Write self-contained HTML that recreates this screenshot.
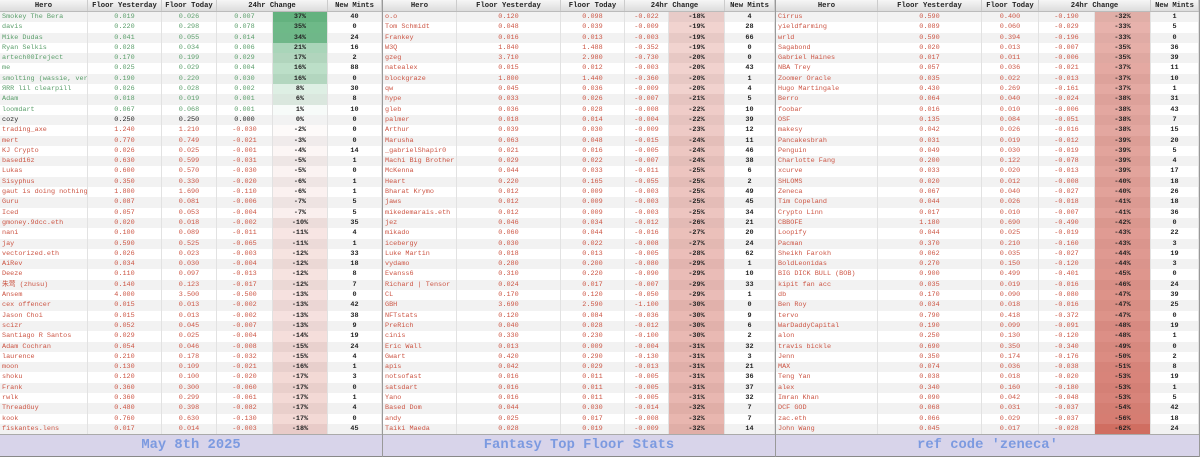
<!DOCTYPE html>
<html><head><meta charset="utf-8"><style>
*{margin:0;padding:0;box-sizing:border-box}
body{width:1200px;height:457px;background:#fff;font-family:"Liberation Mono","Noto Sans CJK SC",monospace;overflow:hidden;position:relative}
.p{position:absolute;top:0;height:457px;border-right:1px solid #999}
.h{height:12px;display:flex;background:linear-gradient(#f6f6f6,#dcdcdc);border-bottom:1px solid #bbb;font-weight:bold;font-size:7.2px;line-height:12px;color:#222}
.h span{text-align:center;border-right:1px solid #ccc;white-space:nowrap;overflow:hidden}
.r{height:10.3px;display:flex;font-size:6.8px;line-height:10.3px;color:#cc5544;white-space:nowrap}
.r:nth-child(odd){background:#f2f2f2}
.r>*{border-right:1px solid #e2e2e2;overflow:hidden;text-align:center;font-style:normal;text-decoration:none;font-weight:normal}
.r b{text-align:left;padding-left:2px}
.r u{background:rgba(200,80,65,var(--a));color:#222;font-weight:bold}
.r s{color:#222;font-weight:bold}
.g{color:#5a9e6a}.g u{background:rgba(60,160,95,var(--a))}
.k{color:#222;font-weight:bold}.k u{background:none}
.f{position:absolute;left:0;right:0;top:434px;height:23px;background:#d8d4ea;border-top:1px solid #aaa;border-bottom:1px solid #888;text-align:center;font-weight:bold;font-size:13.8px;line-height:22px;color:#7c9ae0}
.p1 .c1{width:88px}.p1 .c2{width:74px}.p1 .c3{width:55px}.p1 .c4{width:56px}.p1 .c5{width:55px}.p1 .c6{width:54px}.p1 .c45{width:111px}
.p2 .c1{width:74px}.p2 .c2{width:104px}.p2 .c3{width:64px}.p2 .c4{width:44px}.p2 .c5{width:56px}.p2 .c6{width:50px}.p2 .c45{width:100px}
.p3 .c1{width:102px}.p3 .c2{width:104px}.p3 .c3{width:57px}.p3 .c4{width:56px}.p3 .c5{width:56px}.p3 .c6{width:48px}.p3 .c45{width:112px}
</style></head><body>

<div class="p p1" style="left:0;width:383px">
<div class="h"><span class="c1">Hero</span><span class="c2">Floor Yesterday</span><span class="c3">Floor Today</span><span class="c45">24hr Change</span><span class="c6">New Mints</span></div>
<div>
<div class="r g"><b class="c1">Smokey The Bera</b><i class="c2">0.019</i><i class="c3">0.026</i><i class="c4">0.007</i><u class="c5" style="--a:.78">37%</u><s class="c6">40</s></div>
<div class="r g"><b class="c1">davis</b><i class="c2">0.220</i><i class="c3">0.298</i><i class="c4">0.078</i><u class="c5" style="--a:.74">35%</u><s class="c6">0</s></div>
<div class="r g"><b class="c1">Mike Dudas</b><i class="c2">0.041</i><i class="c3">0.055</i><i class="c4">0.014</i><u class="c5" style="--a:.72">34%</u><s class="c6">24</s></div>
<div class="r g"><b class="c1">Ryan Selkis</b><i class="c2">0.028</i><i class="c3">0.034</i><i class="c4">0.006</i><u class="c5" style="--a:.44">21%</u><s class="c6">16</s></div>
<div class="r g"><b class="c1">artech00Ireject</b><i class="c2">0.170</i><i class="c3">0.199</i><i class="c4">0.029</i><u class="c5" style="--a:.36">17%</u><s class="c6">2</s></div>
<div class="r g"><b class="c1">me</b><i class="c2">0.025</i><i class="c3">0.029</i><i class="c4">0.004</i><u class="c5" style="--a:.34">16%</u><s class="c6">88</s></div>
<div class="r g"><b class="c1">smolting (wassie, verb)</b><i class="c2">0.190</i><i class="c3">0.220</i><i class="c4">0.030</i><u class="c5" style="--a:.34">16%</u><s class="c6">0</s></div>
<div class="r g"><b class="c1">ЯRR lil clearpill</b><i class="c2">0.026</i><i class="c3">0.028</i><i class="c4">0.002</i><u class="c5" style="--a:.17">8%</u><s class="c6">30</s></div>
<div class="r g"><b class="c1">Adam</b><i class="c2">0.018</i><i class="c3">0.019</i><i class="c4">0.001</i><u class="c5" style="--a:.13">6%</u><s class="c6">8</s></div>
<div class="r g"><b class="c1">loomdart</b><i class="c2">0.067</i><i class="c3">0.068</i><i class="c4">0.001</i><u class="c5" style="--a:.04">1%</u><s class="c6">10</s></div>
<div class="r k"><b class="c1">cozy</b><i class="c2">0.250</i><i class="c3">0.250</i><i class="c4">0.000</i><u class="c5">0%</u><s class="c6">0</s></div>
<div class="r"><b class="c1">trading_axe</b><i class="c2">1.240</i><i class="c3">1.210</i><i class="c4">-0.030</i><u class="c5" style="--a:.03">-2%</u><s class="c6">0</s></div>
<div class="r"><b class="c1">mert</b><i class="c2">0.770</i><i class="c3">0.749</i><i class="c4">-0.021</i><u class="c5" style="--a:.04">-3%</u><s class="c6">0</s></div>
<div class="r"><b class="c1">KJ Crypto</b><i class="c2">0.026</i><i class="c3">0.025</i><i class="c4">-0.001</i><u class="c5" style="--a:.05">-4%</u><s class="c6">14</s></div>
<div class="r"><b class="c1">based16z</b><i class="c2">0.630</i><i class="c3">0.599</i><i class="c4">-0.031</i><u class="c5" style="--a:.07">-5%</u><s class="c6">1</s></div>
<div class="r"><b class="c1">Lukas</b><i class="c2">0.600</i><i class="c3">0.570</i><i class="c4">-0.030</i><u class="c5" style="--a:.07">-5%</u><s class="c6">0</s></div>
<div class="r"><b class="c1">Sisyphus</b><i class="c2">0.350</i><i class="c3">0.330</i><i class="c4">-0.020</i><u class="c5" style="--a:.08">-6%</u><s class="c6">1</s></div>
<div class="r"><b class="c1">gaut is doing nothing</b><i class="c2">1.800</i><i class="c3">1.690</i><i class="c4">-0.110</i><u class="c5" style="--a:.08">-6%</u><s class="c6">1</s></div>
<div class="r"><b class="c1">Guru</b><i class="c2">0.087</i><i class="c3">0.081</i><i class="c4">-0.006</i><u class="c5" style="--a:.09">-7%</u><s class="c6">5</s></div>
<div class="r"><b class="c1">Iced</b><i class="c2">0.057</i><i class="c3">0.053</i><i class="c4">-0.004</i><u class="c5" style="--a:.09">-7%</u><s class="c6">5</s></div>
<div class="r"><b class="c1">gmoney.9dcc.eth</b><i class="c2">0.020</i><i class="c3">0.018</i><i class="c4">-0.002</i><u class="c5" style="--a:.13">-10%</u><s class="c6">35</s></div>
<div class="r"><b class="c1">nani</b><i class="c2">0.100</i><i class="c3">0.089</i><i class="c4">-0.011</i><u class="c5" style="--a:.15">-11%</u><s class="c6">4</s></div>
<div class="r"><b class="c1">jay</b><i class="c2">0.590</i><i class="c3">0.525</i><i class="c4">-0.065</i><u class="c5" style="--a:.15">-11%</u><s class="c6">1</s></div>
<div class="r"><b class="c1">vectorized.eth</b><i class="c2">0.026</i><i class="c3">0.023</i><i class="c4">-0.003</i><u class="c5" style="--a:.16">-12%</u><s class="c6">33</s></div>
<div class="r"><b class="c1">AiRev</b><i class="c2">0.034</i><i class="c3">0.030</i><i class="c4">-0.004</i><u class="c5" style="--a:.16">-12%</u><s class="c6">18</s></div>
<div class="r"><b class="c1">Deeze</b><i class="c2">0.110</i><i class="c3">0.097</i><i class="c4">-0.013</i><u class="c5" style="--a:.16">-12%</u><s class="c6">8</s></div>
<div class="r"><b class="c1">朱莺 (zhusu)</b><i class="c2">0.140</i><i class="c3">0.123</i><i class="c4">-0.017</i><u class="c5" style="--a:.16">-12%</u><s class="c6">7</s></div>
<div class="r"><b class="c1">Ansem</b><i class="c2">4.000</i><i class="c3">3.500</i><i class="c4">-0.500</i><u class="c5" style="--a:.17">-13%</u><s class="c6">0</s></div>
<div class="r"><b class="c1">cex offencer</b><i class="c2">0.015</i><i class="c3">0.013</i><i class="c4">-0.002</i><u class="c5" style="--a:.17">-13%</u><s class="c6">42</s></div>
<div class="r"><b class="c1">Jason Choi</b><i class="c2">0.015</i><i class="c3">0.013</i><i class="c4">-0.002</i><u class="c5" style="--a:.17">-13%</u><s class="c6">38</s></div>
<div class="r"><b class="c1">scizr</b><i class="c2">0.052</i><i class="c3">0.045</i><i class="c4">-0.007</i><u class="c5" style="--a:.17">-13%</u><s class="c6">9</s></div>
<div class="r"><b class="c1">Santiago R Santos</b><i class="c2">0.029</i><i class="c3">0.025</i><i class="c4">-0.004</i><u class="c5" style="--a:.19">-14%</u><s class="c6">19</s></div>
<div class="r"><b class="c1">Adam Cochran</b><i class="c2">0.054</i><i class="c3">0.046</i><i class="c4">-0.008</i><u class="c5" style="--a:.2">-15%</u><s class="c6">24</s></div>
<div class="r"><b class="c1">laurence</b><i class="c2">0.210</i><i class="c3">0.178</i><i class="c4">-0.032</i><u class="c5" style="--a:.2">-15%</u><s class="c6">4</s></div>
<div class="r"><b class="c1">moon</b><i class="c2">0.130</i><i class="c3">0.109</i><i class="c4">-0.021</i><u class="c5" style="--a:.21">-16%</u><s class="c6">1</s></div>
<div class="r"><b class="c1">shoku</b><i class="c2">0.120</i><i class="c3">0.100</i><i class="c4">-0.020</i><u class="c5" style="--a:.22">-17%</u><s class="c6">3</s></div>
<div class="r"><b class="c1">Frank</b><i class="c2">0.360</i><i class="c3">0.300</i><i class="c4">-0.060</i><u class="c5" style="--a:.22">-17%</u><s class="c6">0</s></div>
<div class="r"><b class="c1">rwlk</b><i class="c2">0.360</i><i class="c3">0.299</i><i class="c4">-0.061</i><u class="c5" style="--a:.22">-17%</u><s class="c6">1</s></div>
<div class="r"><b class="c1">ThreadGuy</b><i class="c2">0.480</i><i class="c3">0.398</i><i class="c4">-0.082</i><u class="c5" style="--a:.22">-17%</u><s class="c6">4</s></div>
<div class="r"><b class="c1">kook</b><i class="c2">0.760</i><i class="c3">0.630</i><i class="c4">-0.130</i><u class="c5" style="--a:.22">-17%</u><s class="c6">0</s></div>
<div class="r"><b class="c1">fiskantes.lens</b><i class="c2">0.017</i><i class="c3">0.014</i><i class="c4">-0.003</i><u class="c5" style="--a:.24">-18%</u><s class="c6">45</s></div>
</div>
<div class="f">May 8th 2025</div>
</div>

<div class="p p2" style="left:383px;width:393px">
<div class="h"><span class="c1">Hero</span><span class="c2">Floor Yesterday</span><span class="c3">Floor Today</span><span class="c45">24hr Change</span><span class="c6">New Mints</span></div>
<div>
<div class="r"><b class="c1">o.o</b><i class="c2">0.120</i><i class="c3">0.098</i><i class="c4">-0.022</i><u class="c5" style="--a:.24">-18%</u><s class="c6">4</s></div>
<div class="r"><b class="c1">Tom Schmidt</b><i class="c2">0.048</i><i class="c3">0.039</i><i class="c4">-0.009</i><u class="c5" style="--a:.25">-19%</u><s class="c6">28</s></div>
<div class="r"><b class="c1">Frankey</b><i class="c2">0.016</i><i class="c3">0.013</i><i class="c4">-0.003</i><u class="c5" style="--a:.25">-19%</u><s class="c6">66</s></div>
<div class="r"><b class="c1">W3Q</b><i class="c2">1.840</i><i class="c3">1.488</i><i class="c4">-0.352</i><u class="c5" style="--a:.25">-19%</u><s class="c6">0</s></div>
<div class="r"><b class="c1">gzeg</b><i class="c2">3.710</i><i class="c3">2.980</i><i class="c4">-0.730</i><u class="c5" style="--a:.26">-20%</u><s class="c6">0</s></div>
<div class="r"><b class="c1">natealex</b><i class="c2">0.015</i><i class="c3">0.012</i><i class="c4">-0.003</i><u class="c5" style="--a:.26">-20%</u><s class="c6">43</s></div>
<div class="r"><b class="c1">blockgraze</b><i class="c2">1.800</i><i class="c3">1.440</i><i class="c4">-0.360</i><u class="c5" style="--a:.26">-20%</u><s class="c6">1</s></div>
<div class="r"><b class="c1">qw</b><i class="c2">0.045</i><i class="c3">0.036</i><i class="c4">-0.009</i><u class="c5" style="--a:.26">-20%</u><s class="c6">4</s></div>
<div class="r"><b class="c1">hype</b><i class="c2">0.033</i><i class="c3">0.026</i><i class="c4">-0.007</i><u class="c5" style="--a:.28">-21%</u><s class="c6">5</s></div>
<div class="r"><b class="c1">gleb</b><i class="c2">0.036</i><i class="c3">0.028</i><i class="c4">-0.008</i><u class="c5" style="--a:.29">-22%</u><s class="c6">10</s></div>
<div class="r"><b class="c1">palmer</b><i class="c2">0.018</i><i class="c3">0.014</i><i class="c4">-0.004</i><u class="c5" style="--a:.29">-22%</u><s class="c6">39</s></div>
<div class="r"><b class="c1">Arthur</b><i class="c2">0.039</i><i class="c3">0.030</i><i class="c4">-0.009</i><u class="c5" style="--a:.3">-23%</u><s class="c6">12</s></div>
<div class="r"><b class="c1">Marusha</b><i class="c2">0.063</i><i class="c3">0.048</i><i class="c4">-0.015</i><u class="c5" style="--a:.32">-24%</u><s class="c6">11</s></div>
<div class="r"><b class="c1">_gabrielShapir0</b><i class="c2">0.021</i><i class="c3">0.016</i><i class="c4">-0.005</i><u class="c5" style="--a:.32">-24%</u><s class="c6">46</s></div>
<div class="r"><b class="c1">Machi Big Brother</b><i class="c2">0.029</i><i class="c3">0.022</i><i class="c4">-0.007</i><u class="c5" style="--a:.32">-24%</u><s class="c6">38</s></div>
<div class="r"><b class="c1">McKenna</b><i class="c2">0.044</i><i class="c3">0.033</i><i class="c4">-0.011</i><u class="c5" style="--a:.33">-25%</u><s class="c6">6</s></div>
<div class="r"><b class="c1">Heart</b><i class="c2">0.220</i><i class="c3">0.165</i><i class="c4">-0.055</i><u class="c5" style="--a:.33">-25%</u><s class="c6">2</s></div>
<div class="r"><b class="c1">Bharat Krymo</b><i class="c2">0.012</i><i class="c3">0.009</i><i class="c4">-0.003</i><u class="c5" style="--a:.33">-25%</u><s class="c6">49</s></div>
<div class="r"><b class="c1">jaws</b><i class="c2">0.012</i><i class="c3">0.009</i><i class="c4">-0.003</i><u class="c5" style="--a:.33">-25%</u><s class="c6">45</s></div>
<div class="r"><b class="c1">mikedemarais.eth</b><i class="c2">0.012</i><i class="c3">0.009</i><i class="c4">-0.003</i><u class="c5" style="--a:.33">-25%</u><s class="c6">34</s></div>
<div class="r"><b class="c1">jez</b><i class="c2">0.046</i><i class="c3">0.034</i><i class="c4">-0.012</i><u class="c5" style="--a:.34">-26%</u><s class="c6">21</s></div>
<div class="r"><b class="c1">mikado</b><i class="c2">0.060</i><i class="c3">0.044</i><i class="c4">-0.016</i><u class="c5" style="--a:.36">-27%</u><s class="c6">20</s></div>
<div class="r"><b class="c1">icebergy</b><i class="c2">0.030</i><i class="c3">0.022</i><i class="c4">-0.008</i><u class="c5" style="--a:.36">-27%</u><s class="c6">24</s></div>
<div class="r"><b class="c1">Luke Martin</b><i class="c2">0.018</i><i class="c3">0.013</i><i class="c4">-0.005</i><u class="c5" style="--a:.37">-28%</u><s class="c6">62</s></div>
<div class="r"><b class="c1">vydamo</b><i class="c2">0.280</i><i class="c3">0.200</i><i class="c4">-0.080</i><u class="c5" style="--a:.38">-29%</u><s class="c6">1</s></div>
<div class="r"><b class="c1">Evanss6</b><i class="c2">0.310</i><i class="c3">0.220</i><i class="c4">-0.090</i><u class="c5" style="--a:.38">-29%</u><s class="c6">10</s></div>
<div class="r"><b class="c1">Richard | Tensor</b><i class="c2">0.024</i><i class="c3">0.017</i><i class="c4">-0.007</i><u class="c5" style="--a:.38">-29%</u><s class="c6">33</s></div>
<div class="r"><b class="c1">CL</b><i class="c2">0.170</i><i class="c3">0.120</i><i class="c4">-0.050</i><u class="c5" style="--a:.38">-29%</u><s class="c6">1</s></div>
<div class="r"><b class="c1">GBH</b><i class="c2">3.690</i><i class="c3">2.590</i><i class="c4">-1.100</i><u class="c5" style="--a:.4">-30%</u><s class="c6">0</s></div>
<div class="r"><b class="c1">NFTstats</b><i class="c2">0.120</i><i class="c3">0.084</i><i class="c4">-0.036</i><u class="c5" style="--a:.4">-30%</u><s class="c6">9</s></div>
<div class="r"><b class="c1">PreRich</b><i class="c2">0.040</i><i class="c3">0.028</i><i class="c4">-0.012</i><u class="c5" style="--a:.4">-30%</u><s class="c6">6</s></div>
<div class="r"><b class="c1">cinis</b><i class="c2">0.330</i><i class="c3">0.230</i><i class="c4">-0.100</i><u class="c5" style="--a:.4">-30%</u><s class="c6">2</s></div>
<div class="r"><b class="c1">Eric Wall</b><i class="c2">0.013</i><i class="c3">0.009</i><i class="c4">-0.004</i><u class="c5" style="--a:.41">-31%</u><s class="c6">32</s></div>
<div class="r"><b class="c1">Gwart</b><i class="c2">0.420</i><i class="c3">0.290</i><i class="c4">-0.130</i><u class="c5" style="--a:.41">-31%</u><s class="c6">3</s></div>
<div class="r"><b class="c1">apis</b><i class="c2">0.042</i><i class="c3">0.029</i><i class="c4">-0.013</i><u class="c5" style="--a:.41">-31%</u><s class="c6">21</s></div>
<div class="r"><b class="c1">notsofast</b><i class="c2">0.016</i><i class="c3">0.011</i><i class="c4">-0.005</i><u class="c5" style="--a:.41">-31%</u><s class="c6">36</s></div>
<div class="r"><b class="c1">satsdart</b><i class="c2">0.016</i><i class="c3">0.011</i><i class="c4">-0.005</i><u class="c5" style="--a:.41">-31%</u><s class="c6">37</s></div>
<div class="r"><b class="c1">Yano</b><i class="c2">0.016</i><i class="c3">0.011</i><i class="c4">-0.005</i><u class="c5" style="--a:.41">-31%</u><s class="c6">32</s></div>
<div class="r"><b class="c1">Based Dom</b><i class="c2">0.044</i><i class="c3">0.030</i><i class="c4">-0.014</i><u class="c5" style="--a:.42">-32%</u><s class="c6">7</s></div>
<div class="r"><b class="c1">andy</b><i class="c2">0.025</i><i class="c3">0.017</i><i class="c4">-0.008</i><u class="c5" style="--a:.42">-32%</u><s class="c6">7</s></div>
<div class="r"><b class="c1">Taiki Maeda</b><i class="c2">0.028</i><i class="c3">0.019</i><i class="c4">-0.009</i><u class="c5" style="--a:.42">-32%</u><s class="c6">14</s></div>
</div>
<div class="f">Fantasy Top Floor Stats</div>
</div>

<div class="p p3" style="left:776px;width:424px">
<div class="h"><span class="c1">Hero</span><span class="c2">Floor Yesterday</span><span class="c3">Floor Today</span><span class="c45">24hr Change</span><span class="c6">New Mints</span></div>
<div>
<div class="r"><b class="c1">Cirrus</b><i class="c2">0.590</i><i class="c3">0.400</i><i class="c4">-0.190</i><u class="c5" style="--a:.42">-32%</u><s class="c6">1</s></div>
<div class="r"><b class="c1">yieldfarming</b><i class="c2">0.089</i><i class="c3">0.060</i><i class="c4">-0.029</i><u class="c5" style="--a:.44">-33%</u><s class="c6">5</s></div>
<div class="r"><b class="c1">wrld</b><i class="c2">0.590</i><i class="c3">0.394</i><i class="c4">-0.196</i><u class="c5" style="--a:.44">-33%</u><s class="c6">0</s></div>
<div class="r"><b class="c1">Sagabond</b><i class="c2">0.020</i><i class="c3">0.013</i><i class="c4">-0.007</i><u class="c5" style="--a:.46">-35%</u><s class="c6">36</s></div>
<div class="r"><b class="c1">Gabriel Haines</b><i class="c2">0.017</i><i class="c3">0.011</i><i class="c4">-0.006</i><u class="c5" style="--a:.46">-35%</u><s class="c6">39</s></div>
<div class="r"><b class="c1">NBA Trey</b><i class="c2">0.057</i><i class="c3">0.036</i><i class="c4">-0.021</i><u class="c5" style="--a:.49">-37%</u><s class="c6">11</s></div>
<div class="r"><b class="c1">Zoomer Oracle</b><i class="c2">0.035</i><i class="c3">0.022</i><i class="c4">-0.013</i><u class="c5" style="--a:.49">-37%</u><s class="c6">10</s></div>
<div class="r"><b class="c1">Hugo Martingale</b><i class="c2">0.430</i><i class="c3">0.269</i><i class="c4">-0.161</i><u class="c5" style="--a:.49">-37%</u><s class="c6">1</s></div>
<div class="r"><b class="c1">Berro</b><i class="c2">0.064</i><i class="c3">0.040</i><i class="c4">-0.024</i><u class="c5" style="--a:.5">-38%</u><s class="c6">31</s></div>
<div class="r"><b class="c1">foobar</b><i class="c2">0.016</i><i class="c3">0.010</i><i class="c4">-0.006</i><u class="c5" style="--a:.5">-38%</u><s class="c6">43</s></div>
<div class="r"><b class="c1">OSF</b><i class="c2">0.135</i><i class="c3">0.084</i><i class="c4">-0.051</i><u class="c5" style="--a:.5">-38%</u><s class="c6">7</s></div>
<div class="r"><b class="c1">makesy</b><i class="c2">0.042</i><i class="c3">0.026</i><i class="c4">-0.016</i><u class="c5" style="--a:.5">-38%</u><s class="c6">15</s></div>
<div class="r"><b class="c1">Pancakesbrah</b><i class="c2">0.031</i><i class="c3">0.019</i><i class="c4">-0.012</i><u class="c5" style="--a:.52">-39%</u><s class="c6">20</s></div>
<div class="r"><b class="c1">Penguin</b><i class="c2">0.049</i><i class="c3">0.030</i><i class="c4">-0.019</i><u class="c5" style="--a:.52">-39%</u><s class="c6">5</s></div>
<div class="r"><b class="c1">Charlotte Fang</b><i class="c2">0.200</i><i class="c3">0.122</i><i class="c4">-0.078</i><u class="c5" style="--a:.52">-39%</u><s class="c6">4</s></div>
<div class="r"><b class="c1">xcurve</b><i class="c2">0.033</i><i class="c3">0.020</i><i class="c4">-0.013</i><u class="c5" style="--a:.52">-39%</u><s class="c6">17</s></div>
<div class="r"><b class="c1">SHLOMS</b><i class="c2">0.020</i><i class="c3">0.012</i><i class="c4">-0.008</i><u class="c5" style="--a:.53">-40%</u><s class="c6">18</s></div>
<div class="r"><b class="c1">Zeneca</b><i class="c2">0.067</i><i class="c3">0.040</i><i class="c4">-0.027</i><u class="c5" style="--a:.53">-40%</u><s class="c6">26</s></div>
<div class="r"><b class="c1">Tim Copeland</b><i class="c2">0.044</i><i class="c3">0.026</i><i class="c4">-0.018</i><u class="c5" style="--a:.54">-41%</u><s class="c6">18</s></div>
<div class="r"><b class="c1">Crypto Linn</b><i class="c2">0.017</i><i class="c3">0.010</i><i class="c4">-0.007</i><u class="c5" style="--a:.54">-41%</u><s class="c6">36</s></div>
<div class="r"><b class="c1">CBBOFE</b><i class="c2">1.180</i><i class="c3">0.690</i><i class="c4">-0.490</i><u class="c5" style="--a:.56">-42%</u><s class="c6">0</s></div>
<div class="r"><b class="c1">Loopify</b><i class="c2">0.044</i><i class="c3">0.025</i><i class="c4">-0.019</i><u class="c5" style="--a:.57">-43%</u><s class="c6">22</s></div>
<div class="r"><b class="c1">Pacman</b><i class="c2">0.370</i><i class="c3">0.210</i><i class="c4">-0.160</i><u class="c5" style="--a:.57">-43%</u><s class="c6">3</s></div>
<div class="r"><b class="c1">Sheikh Farokh</b><i class="c2">0.062</i><i class="c3">0.035</i><i class="c4">-0.027</i><u class="c5" style="--a:.58">-44%</u><s class="c6">19</s></div>
<div class="r"><b class="c1">BoldLeonidas</b><i class="c2">0.270</i><i class="c3">0.150</i><i class="c4">-0.120</i><u class="c5" style="--a:.58">-44%</u><s class="c6">3</s></div>
<div class="r"><b class="c1">BIG DICK BULL (BOB)</b><i class="c2">0.900</i><i class="c3">0.499</i><i class="c4">-0.401</i><u class="c5" style="--a:.6">-45%</u><s class="c6">0</s></div>
<div class="r"><b class="c1">kipit fan acc</b><i class="c2">0.035</i><i class="c3">0.019</i><i class="c4">-0.016</i><u class="c5" style="--a:.61">-46%</u><s class="c6">24</s></div>
<div class="r"><b class="c1">db</b><i class="c2">0.170</i><i class="c3">0.090</i><i class="c4">-0.080</i><u class="c5" style="--a:.62">-47%</u><s class="c6">39</s></div>
<div class="r"><b class="c1">Ben Roy</b><i class="c2">0.034</i><i class="c3">0.018</i><i class="c4">-0.016</i><u class="c5" style="--a:.62">-47%</u><s class="c6">25</s></div>
<div class="r"><b class="c1">tervo</b><i class="c2">0.790</i><i class="c3">0.418</i><i class="c4">-0.372</i><u class="c5" style="--a:.62">-47%</u><s class="c6">0</s></div>
<div class="r"><b class="c1">WarDaddyCapital</b><i class="c2">0.190</i><i class="c3">0.099</i><i class="c4">-0.091</i><u class="c5" style="--a:.64">-48%</u><s class="c6">19</s></div>
<div class="r"><b class="c1">alon</b><i class="c2">0.250</i><i class="c3">0.130</i><i class="c4">-0.120</i><u class="c5" style="--a:.64">-48%</u><s class="c6">1</s></div>
<div class="r"><b class="c1">travis bickle</b><i class="c2">0.690</i><i class="c3">0.350</i><i class="c4">-0.340</i><u class="c5" style="--a:.65">-49%</u><s class="c6">0</s></div>
<div class="r"><b class="c1">Jenn</b><i class="c2">0.350</i><i class="c3">0.174</i><i class="c4">-0.176</i><u class="c5" style="--a:.66">-50%</u><s class="c6">2</s></div>
<div class="r"><b class="c1">MAX</b><i class="c2">0.074</i><i class="c3">0.036</i><i class="c4">-0.038</i><u class="c5" style="--a:.68">-51%</u><s class="c6">8</s></div>
<div class="r"><b class="c1">Teng Yan</b><i class="c2">0.038</i><i class="c3">0.018</i><i class="c4">-0.020</i><u class="c5" style="--a:.7">-53%</u><s class="c6">19</s></div>
<div class="r"><b class="c1">alex</b><i class="c2">0.340</i><i class="c3">0.160</i><i class="c4">-0.180</i><u class="c5" style="--a:.7">-53%</u><s class="c6">1</s></div>
<div class="r"><b class="c1">Imran Khan</b><i class="c2">0.090</i><i class="c3">0.042</i><i class="c4">-0.048</i><u class="c5" style="--a:.7">-53%</u><s class="c6">5</s></div>
<div class="r"><b class="c1">DCF GOD</b><i class="c2">0.068</i><i class="c3">0.031</i><i class="c4">-0.037</i><u class="c5" style="--a:.72">-54%</u><s class="c6">42</s></div>
<div class="r"><b class="c1">zac.eth</b><i class="c2">0.066</i><i class="c3">0.029</i><i class="c4">-0.037</i><u class="c5" style="--a:.74">-56%</u><s class="c6">18</s></div>
<div class="r"><b class="c1">John Wang</b><i class="c2">0.045</i><i class="c3">0.017</i><i class="c4">-0.028</i><u class="c5" style="--a:.82">-62%</u><s class="c6">24</s></div>
</div>
<div class="f">ref code 'zeneca'</div>
</div>
</body></html>
